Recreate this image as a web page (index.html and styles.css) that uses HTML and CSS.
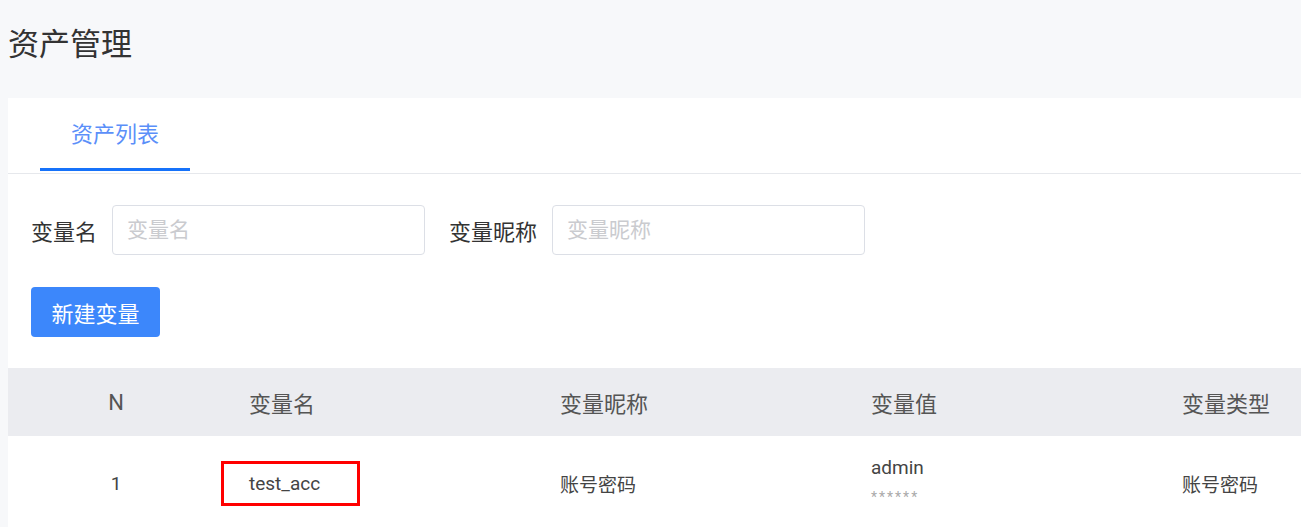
FILE: index.html
```html
<!DOCTYPE html>
<html lang="zh">
<head>
<meta charset="utf-8">
<title>资产管理</title>
<link rel="stylesheet" href="styles.css">
</head>
<body>
<div class="page">
  <header class="page-head"><h1 class="title">资产管理</h1></header>
  <section class="card">
    <nav class="tabs">
      <div class="tab active">资产列表</div>
    </nav>
    <div class="filters">
      <label class="field">
        <span class="field-label">变量名</span>
        <input class="field-input" type="text" placeholder="变量名">
      </label>
      <label class="field">
        <span class="field-label">变量昵称</span>
        <input class="field-input" type="text" placeholder="变量昵称">
      </label>
    </div>
    <div class="actions">
      <button class="btn-primary" type="button">新建变量</button>
    </div>
    <table class="grid">
      <colgroup>
        <col class="c-n"><col class="c-w"><col class="c-w"><col class="c-w"><col class="c-w">
      </colgroup>
      <thead>
        <tr>
          <th class="center">N</th>
          <th>变量名</th>
          <th>变量昵称</th>
          <th>变量值</th>
          <th>变量类型</th>
        </tr>
      </thead>
      <tbody>
        <tr>
          <td class="center">1</td>
          <td><span class="hl">test_acc</span></td>
          <td>账号密码</td>
          <td><div class="val">admin</div><div class="mask">******</div></td>
          <td>账号密码</td>
        </tr>
      </tbody>
    </table>
  </section>
</div>
</body>
</html>
```
FILE: styles.css
```css
html, body {
  margin: 0;
  padding: 0;
  background: #f7f8fa;
  overflow: hidden;
}
body {
  font-family: Roboto, "Noto Sans CJK SC", sans-serif;
  color: #333;
}
.page {
  padding-left: 8px;
}
.page-head {
  height: 98px;
  box-sizing: border-box;
  padding-top: 25px;
}
.title {
  margin: 0;
  font-size: 31px;
  line-height: 40px;
  font-weight: 400;
  color: #333;
}
.card {
  background: #fff;
  min-height: 429px;
}
.tabs {
  display: flex;
  padding-left: 32px;
  padding-bottom: 2px;
  border-bottom: 1px solid #e6e8ec;
}
.tab {
  width: 150px;
  height: 73px;
  box-sizing: border-box;
  padding-top: 22px;
  text-align: center;
  font-size: 22px;
  line-height: 30px;
  color: #5b8ff9;
}
.tab.active {
  border-bottom: 3px solid #1672fa;
}
.filters {
  display: flex;
  gap: 24px;
  padding: 31px 0 0 23px;
}
.field {
  display: flex;
  align-items: center;
  gap: 15px;
}
.field-label {
  font-size: 22px;
  color: #333;
}
.field-input {
  width: 313px;
  height: 50px;
  box-sizing: border-box;
  border: 1px solid #dcdfe6;
  border-radius: 4px;
  padding: 0 14px;
  font-family: Roboto, "Noto Sans CJK SC", sans-serif;
  font-size: 21px;
  color: #333;
  outline: none;
}
.field-input::placeholder {
  color: #cacbcf;
}
.actions {
  padding: 32px 0 0 23px;
}
.btn-primary {
  width: 129px;
  height: 50px;
  border: none;
  border-radius: 4px;
  background: #3c87fb;
  color: #fff;
  font-family: Roboto, "Noto Sans CJK SC", sans-serif;
  font-size: 22px;
  padding: 0;
}
.grid {
  margin-top: 31px;
  border-collapse: collapse;
  table-layout: fixed;
  width: 1460px;
}
.c-n { width: 216px; }
.c-w { width: 311px; }
.grid th {
  height: 68px;
  background: #ebecf0;
  font-weight: 400;
  font-size: 22px;
  color: #555;
  text-align: left;
  padding: 0 0 0 25px;
}
.grid td {
  height: 94px;
  font-size: 19px;
  color: #444;
  text-align: left;
  padding: 0 0 0 25px;
  vertical-align: middle;
}
.grid .center {
  text-align: center;
  padding-left: 0;
}
.hl {
  display: inline-block;
  border: 3px solid #f00;
  line-height: 39px;
  padding: 0 37px 0 25px;
  margin-left: -28px;
}
.val {
  line-height: 24px;
}
.mask {
  font-size: 14px;
  letter-spacing: 2px;
  color: #aaa;
  line-height: 18px;
  margin-top: 8px;
  margin-bottom: 4px;
}
```
